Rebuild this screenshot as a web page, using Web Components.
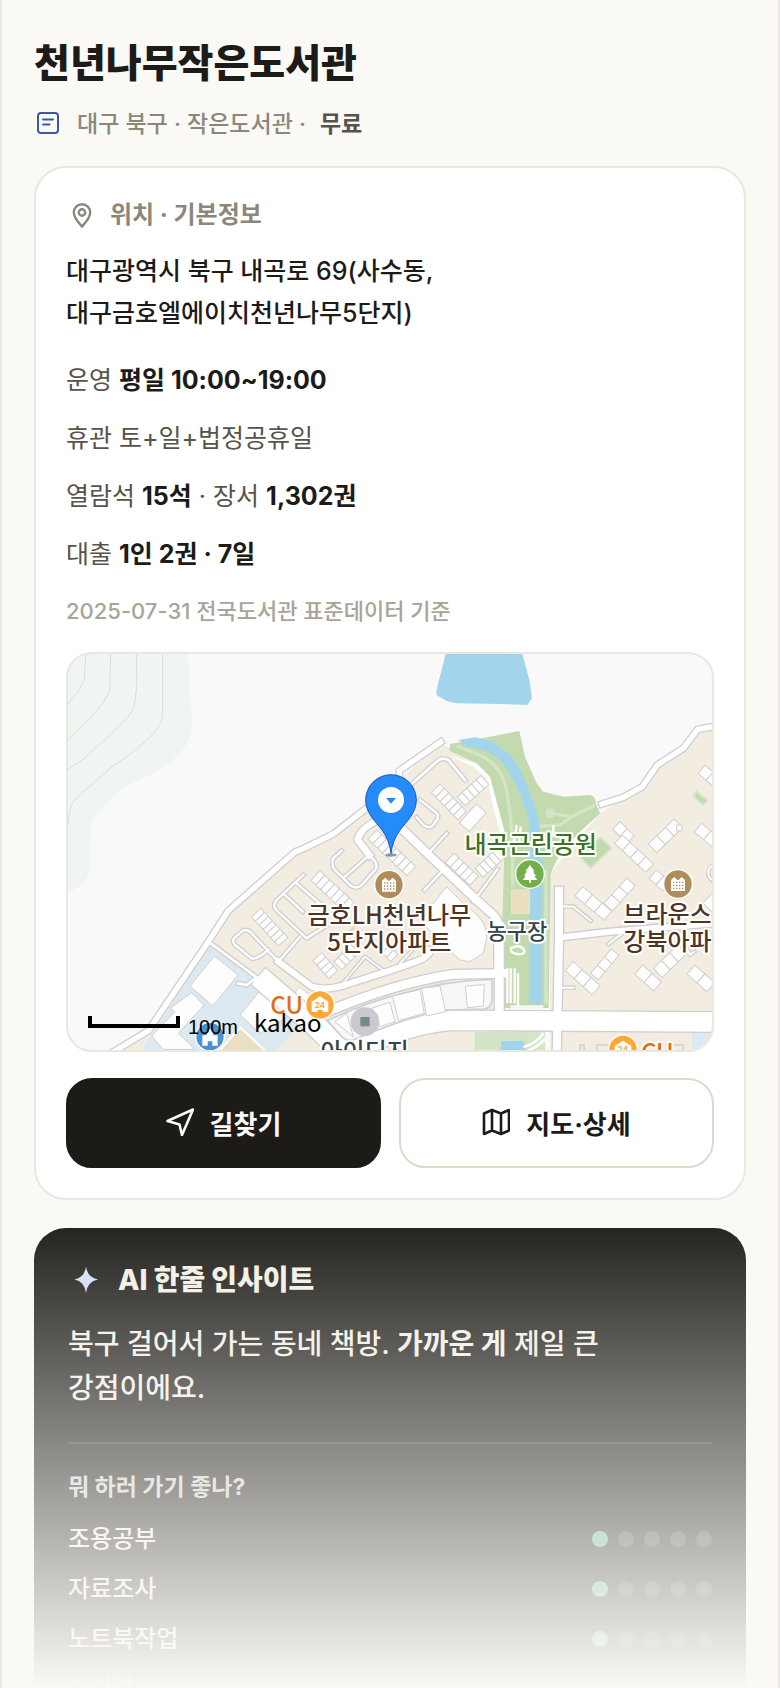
<!DOCTYPE html>
<html lang="ko">
<head>
<meta charset="utf-8">
<meta name="viewport" content="width=device-width, initial-scale=1">
<title>천년나무작은도서관</title>
<style>
  * { box-sizing: border-box; }
  html, body { height: 100%; margin: 0; }
  body {
    background: #faf9f6;
    color: #1c1b17;
    font-family: Inter, "Noto Sans CJK KR", sans-serif;
    font-size: 24px;
    overflow: hidden;
  }
</style>
</head>
<body>
<library-page>
  <library-header slot="header" name="천년나무작은도서관">대구 북구 · 작은도서관 · <strong slot="fee">무료</strong></library-header>
  <info-card heading="위치 · 기본정보">
    <info-row kind="address">대구광역시 북구 내곡로 69(사수동,<br>대구금호엘에이치천년나무5단지)</info-row>
    <info-row>운영 <b>평일 10:00~19:00</b></info-row>
    <info-row>휴관 토+일+법정공휴일</info-row>
    <info-row>열람석 <b>15석</b> · 장서 <b>1,302권</b></info-row>
    <info-row>대출 <b>1인 2권 · 7일</b></info-row>
    <info-row kind="note">2025-07-31 전국도서관 표준데이터 기준</info-row>
    <location-map slot="map"></location-map>
    <action-button slot="actions" icon="route" primary>길찾기</action-button>
    <action-button slot="actions" icon="map">지도·상세</action-button>
  </info-card>
  <insight-card heading="AI 한줄 인사이트" question="뭐 하러 가기 좋나?">
    <span slot="summary">북구 걸어서 가는 동네 책방. <b>가까운 게</b> 제일 큰 강점이에요.</span>
    <score-row score="1">조용공부</score-row>
    <score-row score="1">자료조사</score-row>
    <score-row score="1">노트북작업</score-row>
    <score-row score="3">아이랑</score-row>
  </insight-card>
</library-page>

<script>
class LibraryPage extends HTMLElement {
  connectedCallback() {
    this.attachShadow({ mode: 'open' });
    this.shadowRoot.innerHTML = `
      <style>
        :host {
          display: block;
          box-sizing: border-box;
          position: relative;
          height: 100vh;
          overflow: hidden;
          padding: 34px 32px;
          border: solid #e9e7e0;
          border-width: 0 2px;
          background: #faf9f6;
        }
        main { display: flex; flex-direction: column; gap: 28px; }
        .fade {
          position: absolute;
          inset: auto -2px 0;
          height: 480px;
          background: linear-gradient(rgba(250, 249, 246, 0), #faf9f6);
          pointer-events: none;
        }
      </style>
      <slot name="header"></slot>
      <main><slot></slot></main>
      <div class="fade"></div>
    `;
  }
}

class LibraryHeader extends HTMLElement {
  connectedCallback() {
    this.attachShadow({ mode: 'open' });
    this.shadowRoot.innerHTML = `
      <style>
        :host { display: block; margin-bottom: 22px; }
        h1 { margin: 0 0 12px; font-size: 39px; line-height: 58px; font-weight: 800; }
        p {
          display: flex;
          align-items: center;
          gap: 14px;
          margin: 0;
          color: #8b877b;
          font-size: 23px;
          line-height: 40px;
          font-weight: 500;
        }
        svg { width: 28px; height: 28px; color: #3b58a8; margin-left: 1px; }
        ::slotted(strong) { color: #56534a; font-weight: 600; }
      </style>
      <h1>${this.getAttribute('name')}</h1>
      <p>
        <svg viewBox="0 0 28 28" fill="none" stroke="currentColor" stroke-width="2" stroke-linecap="round">
          <rect x="3" y="3" width="20" height="20" rx="3"/><path d="M8 9.500h10M8 14.500h6.500"/>
        </svg>
        <span><slot></slot></span><slot name="fee"></slot>
      </p>
    `;
  }
}

class InfoCard extends HTMLElement {
  connectedCallback() {
    this.attachShadow({ mode: 'open' });
    this.shadowRoot.innerHTML = `
      <style>
        :host {
          display: block;
          padding: 30px;
          background: #fff;
          border: 2px solid #e9e7e0;
          border-radius: 32px;
        }
        h2 {
          display: flex;
          align-items: center;
          gap: 12px;
          margin: 0 0 18px;
          color: #8b877b;
          font-size: 24px;
          line-height: 34px;
          font-weight: 700;
        }
        h2 svg { width: 32px; height: 32px; }
        .rows { display: flex; flex-direction: column; gap: 22px; margin-bottom: 24px; }
        .actions { display: flex; gap: 18px; margin-top: 26px; }
      </style>
      <h2>
        <svg viewBox="0 0 32 32" fill="none" stroke="currentColor" stroke-width="2.400">
          <path d="M16 27.500c-4-4.500-8.200-8.700-8.200-14a8.200 8.200 0 0 1 16.400 0c0 5.300-4.200 9.500-8.200 14z"/>
          <circle cx="16" cy="13.500" r="3.200"/>
        </svg>
        ${this.getAttribute('heading')}
      </h2>
      <div class="rows"><slot></slot></div>
      <slot name="map"></slot>
      <div class="actions"><slot name="actions"></slot></div>
    `;
  }
}

class InfoRow extends HTMLElement {
  connectedCallback() {
    this.attachShadow({ mode: 'open' });
    this.shadowRoot.innerHTML = `
      <style>
        :host { display: block; color: #56534a; font-size: 25px; line-height: 36px; }
        :host([kind="address"]) { margin-bottom: 6px; color: #1c1b17; line-height: 42px; font-weight: 500; }
        :host([kind="note"]) { color: #a8a498; font-size: 22px; line-height: 34px; font-weight: 500; }
        ::slotted(b) { color: #1c1b17; font-weight: 700; }
      </style>
      <slot></slot>
    `;
  }
}

const ICONS = {
  route: '<path d="M27 1.500L1.500 13l12 3.500L16 27z"/>',
  map: '<path d="M2 5.500l8-3.500 9 3.500L27 2v20.500l-8 3.500-9-3.500L2 26zM10 2v20.500M19 5.500V26"/>'
};

class ActionButton extends HTMLElement {
  connectedCallback() {
    this.attachShadow({ mode: 'open' });
    this.shadowRoot.innerHTML = `
      <style>
        :host { display: block; flex: 1; }
        button {
          display: flex;
          align-items: center;
          justify-content: center;
          gap: 16px;
          width: 100%;
          height: 90px;
          padding: 0 0 2px;
          border: 2px solid #dddace;
          border-radius: 26px;
          background: #fff;
          color: #1c1b17;
          font: inherit;
          font-size: 26px;
          font-weight: 700;
          cursor: pointer;
        }
        :host([primary]) button { background: #1c1b17; border-color: #1c1b17; color: #faf9f6; }
        svg { width: 28px; height: 28px; }
      </style>
      <button type="button">
        <svg viewBox="0 0 28 28" fill="none" stroke="currentColor" stroke-width="2.600" stroke-linejoin="round">${ICONS[this.getAttribute('icon')]}</svg>
        <slot></slot>
      </button>
    `;
  }
}

class InsightCard extends HTMLElement {
  connectedCallback() {
    this.attachShadow({ mode: 'open' });
    this.shadowRoot.innerHTML = `
      <style>
        :host {
          display: block;
          padding: 32px 34px;
          border-radius: 32px;
          background: #1c1b17;
          color: #f2efe6;
        }
        h2 {
          display: flex;
          align-items: center;
          gap: 14px;
          margin: 0 0 22px;
          font-size: 28px;
          line-height: 40px;
          font-weight: 800;
        }
        h2 svg { width: 36px; height: 36px; }
        p {
          max-width: 560px;
          margin: 0;
          padding-bottom: 32px;
          font-size: 28px;
          line-height: 44px;
          font-weight: 500;
        }
        section { border-top: 2px solid rgba(255, 255, 255, 0.12); padding-top: 26px; }
        h3 { margin: 0 0 10px; font-size: 23px; line-height: 34px; font-weight: 700; color: #d3d0c6; }
        ::slotted(span) { word-break: keep-all; }
      </style>
      <h2>
        <svg viewBox="0 0 36 36"><path fill="#d3dcf7" d="M18 4.500Q19.500 15.500 30 17.500Q19.500 19.500 18 31Q16.500 19.500 6.500 17.500Q16.500 15.500 18 4.500z"/></svg>
        ${this.getAttribute('heading')}
      </h2>
      <p><slot name="summary"></slot></p>
      <section>
        <h3>${this.getAttribute('question')}</h3>
        <slot></slot>
      </section>
    `;
  }
}

class ScoreRow extends HTMLElement {
  connectedCallback() {
    const score = Number(this.getAttribute('score'));
    let dots = '';
    for (let i = 0; i < 5; i++) dots += `<i class="${i < score ? 'on' : ''}"></i>`;
    this.attachShadow({ mode: 'open' });
    this.shadowRoot.innerHTML = `
      <style>
        :host {
          display: flex;
          align-items: center;
          justify-content: space-between;
          font-size: 24px;
          line-height: 50px;
          font-weight: 500;
        }
        .dots { display: flex; gap: 10px; }
        i { width: 16px; height: 16px; border-radius: 50%; background: rgba(255, 255, 255, 0.16); }
        i.on { background: #58b48c; }
      </style>
      <slot></slot>
      <span class="dots">${dots}</span>
    `;
  }
}

// Map geometry is in map units, three to a pixel at full width.
const ROADS = [
  ['M120 1260L265 1172L445 905L505 812L705 636L730 626L820 582L915 508L1018 436V392L1142 306', 24],
  ['M1055 432L1130 365Q1145 350 1165 360L1215 420', 16],
  ['M960 530Q1000 540 1040 580L1110 648L1250 780L1300 825Q1315 840 1315 860V1000', 32],
  ['M975 530Q900 560 893 600L928 645', 28],
  ['M845 632L820 655Q812 675 825 690L870 735Q890 750 905 735L945 690Q960 670 925 645M855 710L925 648', 15],
  ['M1070 532L1090 555Q1108 568 1120 555L1130 540Q1140 525 1125 515L1080 480', 15],
  ['M1160 580L1110 635M1093 750L1150 690M1240 785L1312 688', 15],
  ['M730 705L650 780Q637 795 648 810L740 895L810 850M710 730L790 800M675 765L728 815M720 890L655 965', 15],
  ['M655 965L570 875Q555 865 545 875L522 895Q515 905 525 915L575 955Q590 960 625 930', 15],
  ['M455 912L540 975L590 1012L560 1035L535 1030', 16],
  ['M655 965L755 1040Q800 1055 870 1030L990 992L1060 968Q1112 950 1110 930', 26],
  ['M850 1028L915 950L975 995M1020 970L1080 905', 13],
  ['M620 1030L770 1160L860 1250', 72],
  ['M790 1120Q1000 1030 1180 1003L1330 1000', 34],
  ['M860 1240Q1030 1150 1180 1141L1960 1146', 66],
  ['M1318 860V1130', 34],
  ['M1497 752V900L1490 1250', 32],
  ['M1495 893L1650 875L1960 850', 26],
  ['M1500 798L1540 800L1592 842M1500 1043H1540M1645 912L1700 870M1860 880L1890 945L1903 935', 14],
  ['M1960 675Q1935 690 1950 715L1980 740', 14],
  ['M1626 492L1690 472L1747 440L1792 375L1870 325L1913 268L1970 258', 24]
];

// x, y, angle, cells, cell width, depth
const BUILDINGS = [
  [780, 692, 43, 7, 20, 40], [602, 805, 47, 7, 17, 38], [950, 570, 43, 8, 20, 38],
  [1140, 432, 46, 6, 19, 36], [1192, 470, -42, 5, 19, 36], [1182, 640, 43, 5, 20, 38],
  [1245, 685, -42, 5, 18, 36], [785, 938, 48, 4, 18, 36], [822, 965, -45, 4, 18, 34],
  [975, 905, 45, 3, 18, 30], [1198, 548, -48, 1, 76, 40],
  [1680, 545, 44, 2, 30, 32], [1687, 585, 43, 4, 32, 34], [1765, 612, -44, 3, 36, 36],
  [1790, 690, 42, 2, 28, 34], [1568, 740, 40, 3, 38, 36], [1632, 790, -48, 3, 34, 34],
  [1540, 965, 42, 3, 36, 36], [1592, 1000, -50, 3, 32, 30], [1748, 975, 42, 2, 38, 36],
  [1780, 985, -44, 3, 34, 38], [1905, 975, 42, 2, 40, 36], [1935, 376, 40, 2, 32, 32],
  [1925, 550, 40, 2, 36, 34], [1956, 760, 44, 1, 60, 40]
];

class LocationMap extends HTMLElement {
  connectedCallback() {
    const stroke = (color, inset) => ROADS.map(([d, w]) => `<path d="${d}" stroke="${color}" stroke-width="${w - inset}"/>`).join('');
    const buildings = BUILDINGS.map(([x, y, a, n, w, h]) => {
      let cells = '';
      for (let i = 0; i < n; i++) cells += `<rect x="${i * w}" width="${w}" height="${h}"/>`;
      return `<g transform="translate(${x} ${y}) rotate(${a})">${cells}</g>`;
    }).join('');
    const apartment = (x, y) => `
      <g transform="translate(${x} ${y})">
        <circle r="43" fill="#b08c5a" stroke="#fff" stroke-width="4"/>
        <path d="M-21 21V-12L-11-21L-2-12L2-12L11-21L21-12V21z" fill="#fff"/>
        <path d="M-13-7V17M-4-7V17M5-7V17M14-7V17" stroke="#b08c5a" stroke-width="4" stroke-dasharray="4 5"/>
      </g>`;
    const store = (x, y) => `
      <g transform="translate(${x} ${y})">
        <circle r="43" fill="#fca834" stroke="#fff" stroke-width="4"/>
        <path d="M0-26L25-10V21H8V14H-8V21H-25V-10z" fill="#fff"/>
        <text class="tiny" y="9" text-anchor="middle">24</text>
      </g>`;
    this.attachShadow({ mode: 'open' });
    this.shadowRoot.innerHTML = `
      <style>
        :host {
          display: block;
          overflow: hidden;
          border: 2px solid #e9e7e0;
          border-radius: 26px;
          background: #f9f9f9;
        }
        svg { display: block; width: 100%; height: 396px; }
        text {
          font-family: "Noto Sans CJK KR", sans-serif;
          font-size: 72px;
          font-weight: 500;
          paint-order: stroke;
          stroke: #fff;
          stroke-width: 12px;
          stroke-linejoin: round;
        }
        .apt { fill: #4f3424; }
        .park { fill: #3d7122; }
        .place { fill: #35454f; }
        .small { font-size: 66px; }
        .cu { fill: #e0700f; }
        .tiny { font: 700 24px Inter, sans-serif; fill: #fca834; stroke: none; }
        .scale { font: 60px "Liberation Sans", sans-serif; stroke: none; }
        .brand { font-weight: 400; stroke: none; }
      </style>
      <svg viewBox="24 42 1932 1188" preserveAspectRatio="xMidYMid slice" role="img" aria-label="도서관 위치 지도" fill="none" stroke-linejoin="round">
        <path fill="#eff5f1" d="M24 42H384L388 150L396 240Q396 290 375 320Q340 370 260 410Q200 435 180 450Q130 500 95 540Q88 600 87 690Q80 735 24 757z"/>
        <path stroke="#d9dedb" stroke-width="3" d="M77 42L73 120L55 155L24 192M152 42L149 150L132 185L90 236L24 300M230 42L229 150L222 202L204 232L150 285L72 355L24 388M308 42V232Q305 255 262 300Q210 345 150 385L45 478Q30 490 24 555"/>
        <path fill="#a2d5eb" d="M1157 42H1387L1408 120L1416 175L1402 195L1320 192L1190 190L1160 183L1130 165Q1128 155 1132 140z"/>
        <path fill="#f3ede1" d="M150 1240L270 1165L445 905L505 805L705 630L820 575L1147 312L1250 370L1290 410L1335 570L1330 1240zM1470 1240V700L1620 520L1745 445L1795 375L1870 325L1915 265H1960V1240z"/>
        <path fill="#dce9f0" d="M445 918L600 1020L740 1140L640 1240H240L330 1100z"/>
        <path fill="#dce9f0" d="M1896 1170H1960V1240H1896z"/>
        <g fill="#fdfdfe" stroke="#cfcfd1" stroke-width="3">
          <path d="M463 948L535 1005L458 1098L390 1038zM395 1058L432 1095L355 1180L405 1228H310L275 1188L345 1115L330 1105zM598 1055L690 1125L600 1180L540 1125zM718 1040L770 1080L750 1100L705 1058z"/>
        </g>
        <path fill="#e9dfc3" stroke="#fff" stroke-width="6" d="M540 1162L620 1236H475z"/>

        <path fill="#fff" d="M1165 345L1250 372L1290 400L1335 560V600H1325L1315 560L1280 415L1240 380z"/>
        <path fill="#c3daae" d="M1170 312L1290 290L1378 273L1395 350L1430 430L1450 455L1510 470L1590 465Q1606 466 1608 490L1620 520L1560 575L1500 640L1472 700L1466 1104H1330L1325 900L1335 580L1290 410L1250 370L1168 332z"/>
        <path stroke="#d3e5c4" stroke-width="10" d="M1190 318L1270 350Q1325 380 1340 450L1350 520L1358 600V740M1458 690V1090M1475 520L1535 530L1605 495M1420 560L1500 555L1535 530"/>
        <circle cx="1470" cy="520" r="15" fill="#d3e5c4"/>
        <path fill="#a2d5eb" d="M1195 300L1245 292L1300 305L1350 345Q1380 380 1400 430L1435 530L1447 640V1092H1407L1410 560Q1400 500 1355 410Q1325 350 1270 330L1220 318z"/>
        <path fill="#e9dfc0" stroke="#efe6c4" stroke-width="3" d="M1355 750H1408V820H1355z"/>
        <path fill="#c3daae" stroke="#d3e5c4" stroke-width="6" d="M1622 592L1654 625L1592 684L1560 650zM1910 455L1942 482L1930 494L1900 468z"/>

        <g stroke-linecap="square">${stroke('#cfcfd1', 0)}</g>
        <g stroke-linecap="square">${stroke('#fff', 8)}</g>
        <path stroke="#fff" stroke-width="7" d="M1342 985V1090M1352 985V1090M1364 985V1090M1374 1000V1100M1352 1100H1450M1370 555L1362 610M1382 560L1376 620M1480 555V590M1352 925Q1380 910 1392 930Q1398 945 1370 942Q1352 940 1352 925z"/>
        <g fill="#fdfdfd" stroke="#cfcfd1" stroke-width="3">
          ${buildings}
          <path d="M1160 740L1205 785L1245 820Q1280 850 1280 890L1270 940L1230 965L1200 960L1140 905L1080 840z"/>
          <path d="M1850 555H1866V572H1850z"/>
        </g>
        <path fill="#f7f7f8" stroke="#cfcfd1" stroke-width="5" d="M802 1142Q920 1085 1030 1060Q1150 1022 1296 1018V1085Q1290 1106 1270 1107L1160 1110Q1040 1130 880 1200Q860 1205 845 1190z"/>
        <path fill="#fdfdfd" stroke="#cfcfd1" stroke-width="3" d="M825 1145L860 1120L880 1190zM935 1105L990 1087L1005 1145L960 1160zM998 1068L1080 1049L1093 1120L1015 1142zM1085 1045L1140 1038L1157 1115L1100 1128zM1216 1038L1273 1034L1270 1098L1222 1103z"/>
        <path fill="#d3e5c4" d="M1244 1176H1455V1240H1244z"/>
        <path fill="#a2d5eb" d="M1325 1204L1390 1202L1400 1240H1318z"/>
        <path stroke="#fff" stroke-width="8" d="M1390 1222Q1430 1210 1450 1180M1405 1232Q1440 1215 1456 1195"/>
        <path stroke="#cfcfd1" stroke-width="5" d="M1560 1232V1215H1572V1232M1610 1232V1215H1680M1835 1215H1870V1232"/>
        <path fill="#e6a94a" opacity=".4" d="M860 880L880 858L885 865L865 885z"/>

        ${apartment(987, 734)}
        ${apartment(1854, 732)}
        ${store(1689, 1228)}
        <text class="cu" x="1743" y="1262">CU</text>
        <circle cx="1410" cy="702" r="43" fill="#72b04c" stroke="#fff" stroke-width="4"/>
        <path fill="#fff" d="M1410 675L1424 694H1419L1428 708H1423L1432 720H1413V728H1407V720H1388L1397 708H1392L1401 694H1396z"/>
        <circle cx="450" cy="1190" r="43" fill="#4b92d0" stroke="#fff" stroke-width="4"/>
        <path fill="#fff" d="M450 1166L460 1175V1186H473V1217H457V1204H443V1217H427V1186H440V1175z"/>

        <text class="apt" x="988" y="853" text-anchor="middle">금호LH천년나무</text>
        <text class="apt" x="988" y="932" text-anchor="middle">5단지아파트</text>
        <text class="apt" x="1690" y="849">브라운스</text>
        <text class="apt" x="1690" y="930">강북아파</text>
        <text class="park" x="1412" y="640" text-anchor="middle">내곡근린공원</text>
        <text class="place small" x="1371" y="897" text-anchor="middle">농구장</text>
        <text class="place" x="914" y="1260" text-anchor="middle">아이디지</text>
        <text class="cu" x="631" y="1122">CU</text>
        ${store(780, 1095)}
        <circle cx="915" cy="1145" r="43" fill="#c9c9cf"/>
        <path fill="#77878c" d="M901 1131H929V1159H901z"/>

        <ellipse cx="993" cy="645" rx="17" ry="5" fill="#555" opacity=".6"/>
        <path fill="#258bfb" stroke="#1757c4" stroke-width="3" d="M993 640Q988 600 966 570C948 546 917 520 917 480A76 76 0 0 1 1069 480C1069 520 1038 546 1020 570Q998 600 993 640z"/>
        <circle cx="993" cy="480" r="39" fill="#fff"/>
        <path fill="#258bfb" d="M978 474H1008L993 491z"/>

        <path stroke="#000" stroke-width="12" stroke-linejoin="miter" d="M90 1128V1158H354V1128"/>
        <text class="scale" x="384" y="1182" fill="#000">100m</text>
        <text class="brand" x="582" y="1175" fill="#000">kakao</text>
      </svg>
    `;
  }
}

customElements.define('library-page', LibraryPage);
customElements.define('library-header', LibraryHeader);
customElements.define('info-card', InfoCard);
customElements.define('info-row', InfoRow);
customElements.define('action-button', ActionButton);
customElements.define('insight-card', InsightCard);
customElements.define('score-row', ScoreRow);
customElements.define('location-map', LocationMap);
</script>
</body>
</html>
